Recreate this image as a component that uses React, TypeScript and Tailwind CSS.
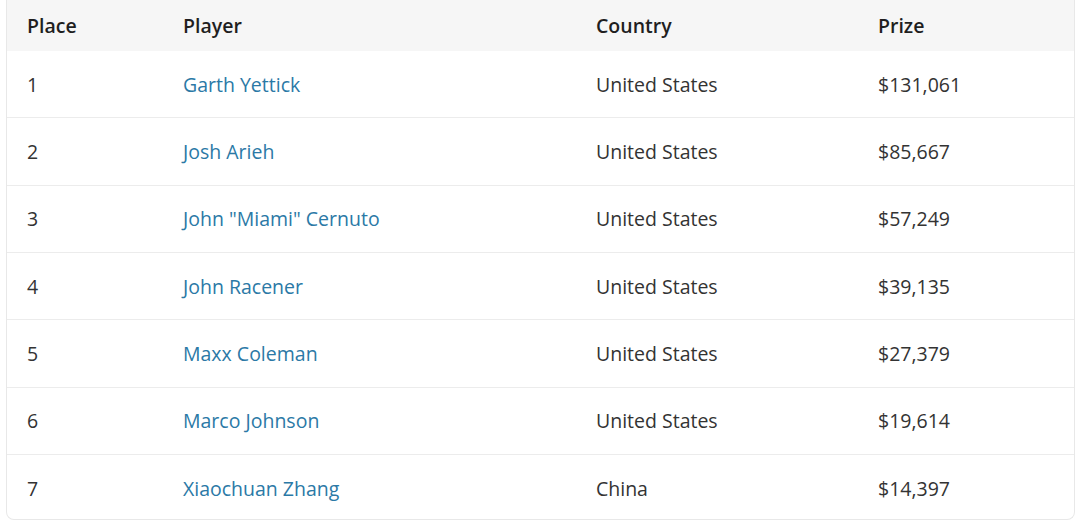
const rows = [
  { place: 1, player: 'Garth Yettick', country: 'United States', prize: '$131,061', h: 'h-[67px] pt-[1px]' },
  { place: 2, player: 'Josh Arieh', country: 'United States', prize: '$85,667', h: 'h-[68px]' },
  { place: 3, player: 'John "Miami" Cernuto', country: 'United States', prize: '$57,249', h: 'h-[67px]' },
  { place: 4, player: 'John Racener', country: 'United States', prize: '$39,135', h: 'h-[67px] pt-[1px]' },
  { place: 5, player: 'Maxx Coleman', country: 'United States', prize: '$27,379', h: 'h-[68px]' },
  { place: 6, player: 'Marco Johnson', country: 'United States', prize: '$19,614', h: 'h-[67px]' },
  { place: 7, player: 'Xiaochuan Zhang', country: 'China', prize: '$14,397', h: 'h-[64px] pt-[4px]' },
];

const cols = 'grid grid-cols-[156px_413px_282px_1fr] items-center [&>div]:pl-[20px]';

export default function App() {
  return (
    <div className="w-[1080px] h-[521px] bg-white pl-[6px] pr-[5px] font-['Open_Sans',sans-serif] text-[19.5px]">
      <div className="border border-t-0 border-[#e8e8e8] rounded-b-[8px] overflow-hidden">
        <div className={`${cols} h-[51px] bg-[#f6f6f6] font-semibold text-[#1f1f1f]`}>
          <div>Place</div>
          <div>Player</div>
          <div>Country</div>
          <div>Prize</div>
        </div>
        {rows.map((r, i) => (
          <div
            key={r.place}
            className={`${cols} ${r.h} text-[#333] ${i < rows.length - 1 ? 'border-b border-[#ececec]' : ''}`}
          >
            <div>{r.place}</div>
            <div>
              <a href="#" className="text-[#2b79a6]">{r.player}</a>
            </div>
            <div>{r.country}</div>
            <div>{r.prize}</div>
          </div>
        ))}
      </div>
    </div>
  );
}
